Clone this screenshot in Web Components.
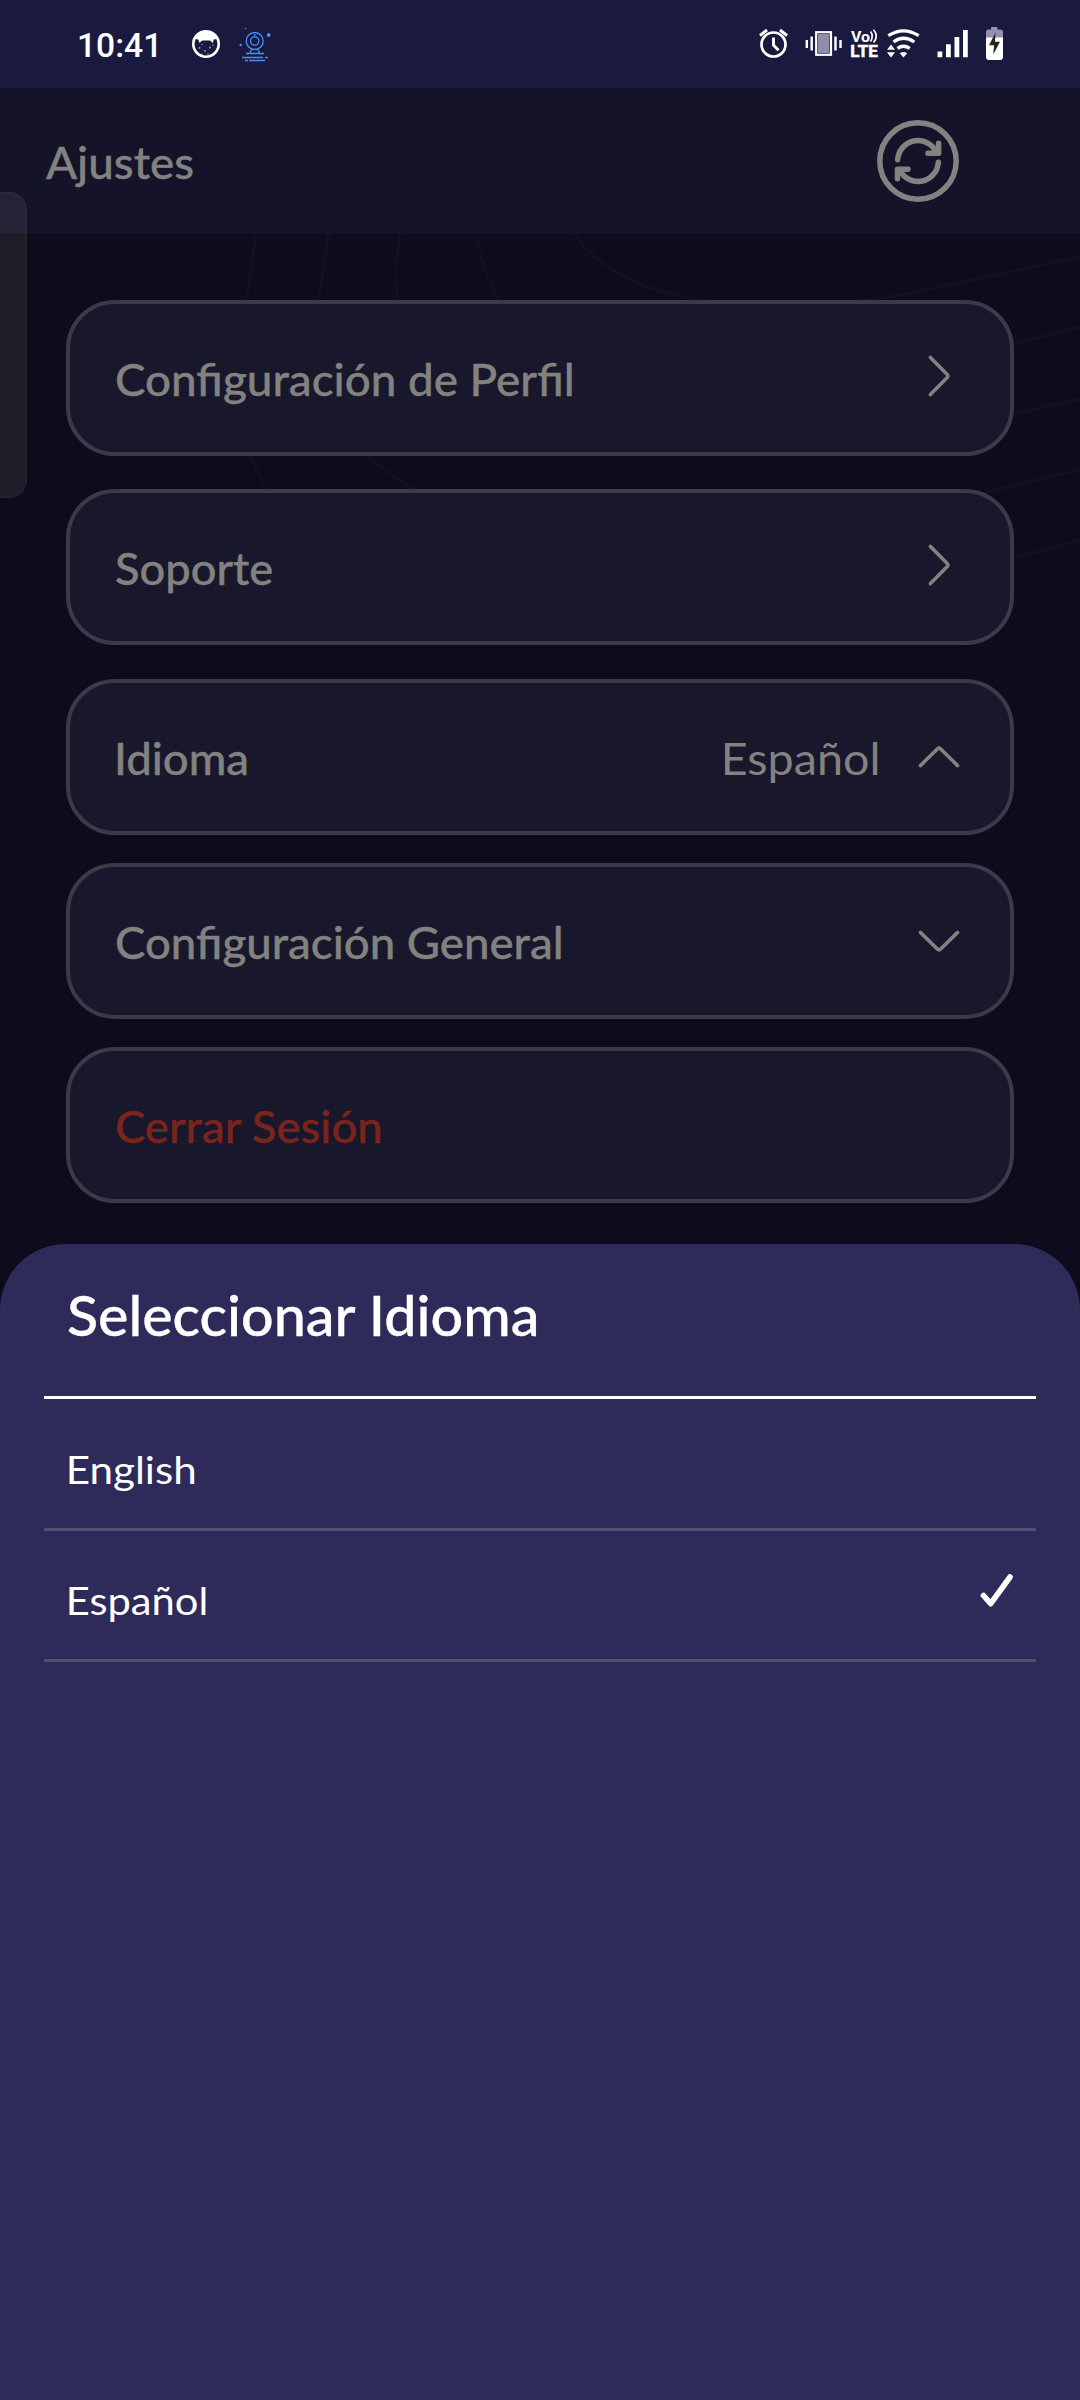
<!DOCTYPE html>
<html lang="es">
<head>
<meta charset="utf-8">
<title>Ajustes</title>
<style>
html,body{margin:0;padding:0;background:#0d0c1c}
body{font-family:Lato,"Open Sans",sans-serif;color:#828280}
</style>
</head>
<body>
<settings-screen></settings-screen>
<script>
const define = (name, html, after) => {
  const t = document.createElement('template');
  t.innerHTML = html;
  customElements.define(name, class extends HTMLElement {
    connectedCallback() {
      if (this.shadowRoot) return;
      this.attachShadow({mode: 'open'}).append(t.content.cloneNode(true));
      if (after) after(this, this.shadowRoot);
    }
  });
};

/* Text whose inked width is set by the "ink" attribute, in pixels. */
const ctx = document.createElement('canvas').getContext('2d');
define('fit-text', `<style>
:host{display:block;white-space:nowrap;flex:none}
span{display:inline-block;transform-origin:0 50%}
</style><span><slot></slot></span>`, (el, root) => {
  const cs = getComputedStyle(el);
  ctx.font = `${cs.fontWeight} ${cs.fontSize} ${cs.fontFamily}`;
  const m = ctx.measureText(el.textContent);
  const ink = +el.getAttribute('ink');
  const s = ink / (m.actualBoundingBoxLeft + m.actualBoundingBoxRight);
  el.style.width = ink + 'px';
  root.querySelector('span').style.transform = `scaleX(${s}) translateX(${m.actualBoundingBoxLeft}px)`;
});

define('status-bar', `<style>
:host{display:flex;height:88px;background:#1a1a3e;color:#fff;box-sizing:border-box}
svg{display:block;flex:none}
.clock{font:500 34px/91px Roboto,sans-serif;margin-left:78.500px}
.apps{margin-left:33.500px}
.sys{margin-left:auto;margin-right:70px}
</style>
<fit-text class="clock" ink="77">10:41</fit-text>
<svg class="apps" width="90" height="88" viewBox="189 0 90 88">
  <circle cx="206" cy="44" r="12.7" fill="none" stroke="#fff" stroke-width="2.6"/>
  <path fill="#fff" d="M194.5 38.500Q199 31 206 31Q213 31 217.500 38.500L213.500 39.800L213 43L210 40.500H202L199.500 43L198.500 39.800Z"/>
  <g fill="#fff" opacity=".55"><circle cx="199.500" cy="48" r=".9"/><circle cx="205" cy="51" r=".9"/><circle cx="210" cy="47.500" r=".9"/><circle cx="202" cy="44.500" r=".7"/><circle cx="213" cy="45" r=".8"/><circle cx="208" cy="54" r=".8"/><circle cx="202" cy="54" r=".7"/></g>
  <g fill="none" stroke="#4a8cfb" stroke-width="1.300">
    <circle cx="254.700" cy="41" r="8.500"/><circle cx="254.700" cy="41" r="4.200"/>
    <path d="M251.500 49.500L250 53M258 49.500L259.500 53M246 53.500H264M242 57.500H263M265 57.500H268M245 60.500H248M249 60.500H265"/>
  </g>
  <g fill="#4a8cfb"><circle cx="268.700" cy="35" r="1.900"/><circle cx="240.700" cy="45" r="1.200"/><circle cx="245.500" cy="28.500" r=".8"/><circle cx="254.700" cy="35" r=".9"/></g>
</svg>
<svg class="sys" width="260" height="88" viewBox="750 0 260 88">
  <g fill="none" stroke="#fff" stroke-width="2.700">
    <circle cx="773.500" cy="44.500" r="12"/>
    <path d="M773.500 37.500V45.200L778.500 50.200" stroke-width="2.900"/>
    <path d="M760 35.500L767 30M787 35.500L780 30" stroke-width="2.900"/>
  </g>
  <g fill="none" stroke="#fff" stroke-width="2.400">
    <rect x="816.300" y="32.300" width="14.600" height="22.400" fill="#8f8dab"/>
    <rect x="817.700" y="33.700" width="11.800" height="19.600" stroke="#1a1a3e" stroke-width="0.6"/>
    <path d="M811.700 36.500V50.500M835.500 36.500V50.500M806.800 40V48M840.500 40V48"/>
  </g>
  <text x="851" y="42.200" font-family="Roboto" font-weight="700" font-size="15" textLength="19" lengthAdjust="spacingAndGlyphs" fill="#fff">Vo</text>
  <text x="850.300" y="57.300" font-family="Roboto" font-weight="700" font-size="16.500" textLength="27.500" lengthAdjust="spacingAndGlyphs" fill="#fff" stroke="#fff" stroke-width=".5">LTE</text>
  <path d="M870.500 31.500Q874 36 870.500 41.500M873.500 29.800Q879 36 873.500 42.500" fill="none" stroke="#fff" stroke-width="1.700"/>
  <g fill="none" stroke="#fff" stroke-width="3.300">
    <path d="M888.300 35.700Q903.500 26 918.700 35.700"/>
    <path d="M893.500 42Q903.500 34.500 914.300 42"/>
    <path d="M897.500 48.300Q903.500 44.300 909.700 48.300"/>
  </g>
  <path fill="#fff" d="M899.800 53.200Q903.500 50.800 907.200 53.200L903.500 57.500ZM887 49.800L891 44.600L895 49.800ZM887 52.200H895L891 57.400Z"/>
  <path fill="#fff" d="M937.500 51.500h4.800v5.700h-4.800zM946 44.300h4.800v12.900h-4.800zM954.500 37h4.800v20.200h-4.800zM963 30h4.800v27.200h-4.800z"/>
  <path fill="#9391ad" d="M986 38V32Q986 29.500 988.500 29.500H991V28Q991 27 992 27H996.500Q997.500 27 997.500 28V29.500H1000Q1003 29.500 1003 32V38Z"/>
  <path fill="#fff" d="M986 37.500H1003V57Q1003 60 1000 60H989Q986 60 986 57Z"/>
  <path fill="#262620" d="M995.500 32.500L989 45.300H994L993.300 54.500L1000 41.800H995Z"/>
</svg>`);

define('app-header', `<style>
:host{display:flex;height:146px;background:#151329;align-items:center;justify-content:space-between;padding:0 121px 0 45.500px;box-sizing:border-box}
fit-text{font:500 44px/52px Lato,sans-serif;padding-top:2px;-webkit-text-stroke:.35px}
svg{display:block}
</style>
<fit-text ink="147">Ajustes</fit-text>
<svg width="82" height="82" viewBox="0 0 82 82" fill="none" stroke="#828280" stroke-width="5.500" stroke-linecap="round" stroke-linejoin="round">
  <circle cx="41" cy="41" r="38.200"/>
  <path d="M20.700 39.700A20.300 20.300 0 0 1 59 31.600M61.600 23.300V33.300H51"/>
  <path d="M61.300 42.300A20.300 20.300 0 0 1 23 50.400M20.500 58.700V49.300H31"/>
</svg>`);

define('chevron-icon', `<style>
:host{display:block;width:44px;height:44px;margin-bottom:5px}
:host([dir=up]) svg{transform:rotate(-90deg)}
:host([dir=down]) svg{transform:rotate(90deg)}
:host([dir=up]),:host([dir=down]){margin-bottom:0}
svg{display:block}
</style><svg width="44" height="44" viewBox="0 0 44 44" fill="none" stroke="#828280" stroke-width="3.600" stroke-linecap="round"><path d="M13.400 3.400L30 20.300Q31.700 22 30 23.700L13.400 40.600"/></svg>`);

define('settings-row', `<style>
:host{display:flex;align-items:center;box-sizing:border-box;height:156px;border:4px solid #3a3a49;border-radius:49px;background:#19172b;padding:0 49.500px 0 45.500px;font:500 44px/52px Lato,sans-serif;-webkit-text-stroke:.35px}
::slotted(fit-text){padding-top:2px}
.end{margin-left:auto;display:flex;align-items:center;gap:39px;font-weight:400;-webkit-text-stroke:0}
</style><slot></slot><div class="end"><slot name="end"></slot></div>`);

define('wave-lines', `<style>:host{display:block;position:absolute;left:0;top:0}svg{display:block}</style>
<svg width="1080" height="400" viewBox="0 234 1080 400" fill="none" stroke="#111021" stroke-width="3.500">
  <path d="M256 234Q252 262 246.500 300Q238 400 250 456L267 492"/>
  <path d="M328 234Q325 262 318.500 300Q318 400 368 456Q390 475 418 492"/>
  <path d="M399.500 234L395 280L398.500 300"/>
  <path d="M477 234Q481 268 499 300"/>
  <path d="M575 234Q600 270 650 288Q770 325 940 287Q1010 272 1080 257"/>
  <path d="M1000 348L1080 327M1000 417L1080 399M985 492L1080 470M1000 562L1080 540"/>
</svg>`);

define('language-option', `<style>
:host{display:flex;box-sizing:border-box;height:132px;border-bottom:3px solid #555070;padding:0 23px 0 24.500px;align-items:center}
::slotted(fit-text){padding-top:11px}
svg{margin-left:auto;display:none;margin-bottom:8px}
:host([selected]) svg{display:block}
:host([selected]){height:131px}
</style><slot></slot><svg width="34" height="36" viewBox="0 0 34 36" fill="none" stroke="#fff" stroke-width="5.600" stroke-linecap="round" stroke-linejoin="round"><path d="M4.500 22.500L11.700 30.700L31 4"/></svg>`);

define('language-sheet', `<style>
:host{display:block;height:1156px;box-sizing:border-box;background:#2e2b5a;border-radius:66px 66px 0 0;padding:0 44px;color:#fff;font:400 38.500px/46px Lato,sans-serif}
header{height:154.500px;box-sizing:border-box;border-bottom:3px solid #fff;padding:38px 22px 0 23.500px;font-size:55px;line-height:66px;font-weight:500;-webkit-text-stroke:.35px}
</style>
<header><fit-text ink="470">Seleccionar Idioma</fit-text></header>
<language-option><fit-text ink="125">English</fit-text></language-option>
<language-option selected><fit-text ink="137">Español</fit-text></language-option>`);

define('edge-handle', `<style>:host{display:block;position:absolute;left:-4px;top:192px;width:30.500px;height:306px;box-sizing:border-box;border:2.500px solid rgba(255,255,230,.03);border-radius:0 18px 18px 0;background:rgba(255,250,215,.068)}</style>`);

define('settings-screen', `<style>
:host{display:flex;flex-direction:column;position:relative;width:1080px;height:2400px;overflow:hidden;background:#0d0c1c}
main{position:relative;height:1010px;flex:none;box-sizing:border-box;padding:66px 66px 0}
.rows{position:relative;display:flex;flex-direction:column}
.rows>*{margin-bottom:28px}
.rows>:first-child{margin-bottom:33px}
.rows>:nth-child(2){margin-bottom:34px}
.danger{color:#7b241c}
.inset{margin-left:1.500px}
status-bar,app-header{flex:none}
</style>
<status-bar></status-bar>
<app-header></app-header>
<main>
  <wave-lines></wave-lines>
  <div class="rows">
    <settings-row><fit-text ink="456">Configuración de Perfil</fit-text><chevron-icon slot="end"></chevron-icon></settings-row>
    <settings-row><fit-text ink="156">Soporte</fit-text><chevron-icon slot="end"></chevron-icon></settings-row>
    <settings-row><fit-text class="inset" ink="130">Idioma</fit-text><fit-text slot="end" ink="153">Español</fit-text><chevron-icon slot="end" dir="up"></chevron-icon></settings-row>
    <settings-row><fit-text ink="445">Configuración General</fit-text><chevron-icon slot="end" dir="down"></chevron-icon></settings-row>
    <settings-row class="danger"><fit-text ink="265">Cerrar Sesión</fit-text></settings-row>
  </div>
</main>
<language-sheet></language-sheet>
<edge-handle></edge-handle>`);
</script>
</body>
</html>
